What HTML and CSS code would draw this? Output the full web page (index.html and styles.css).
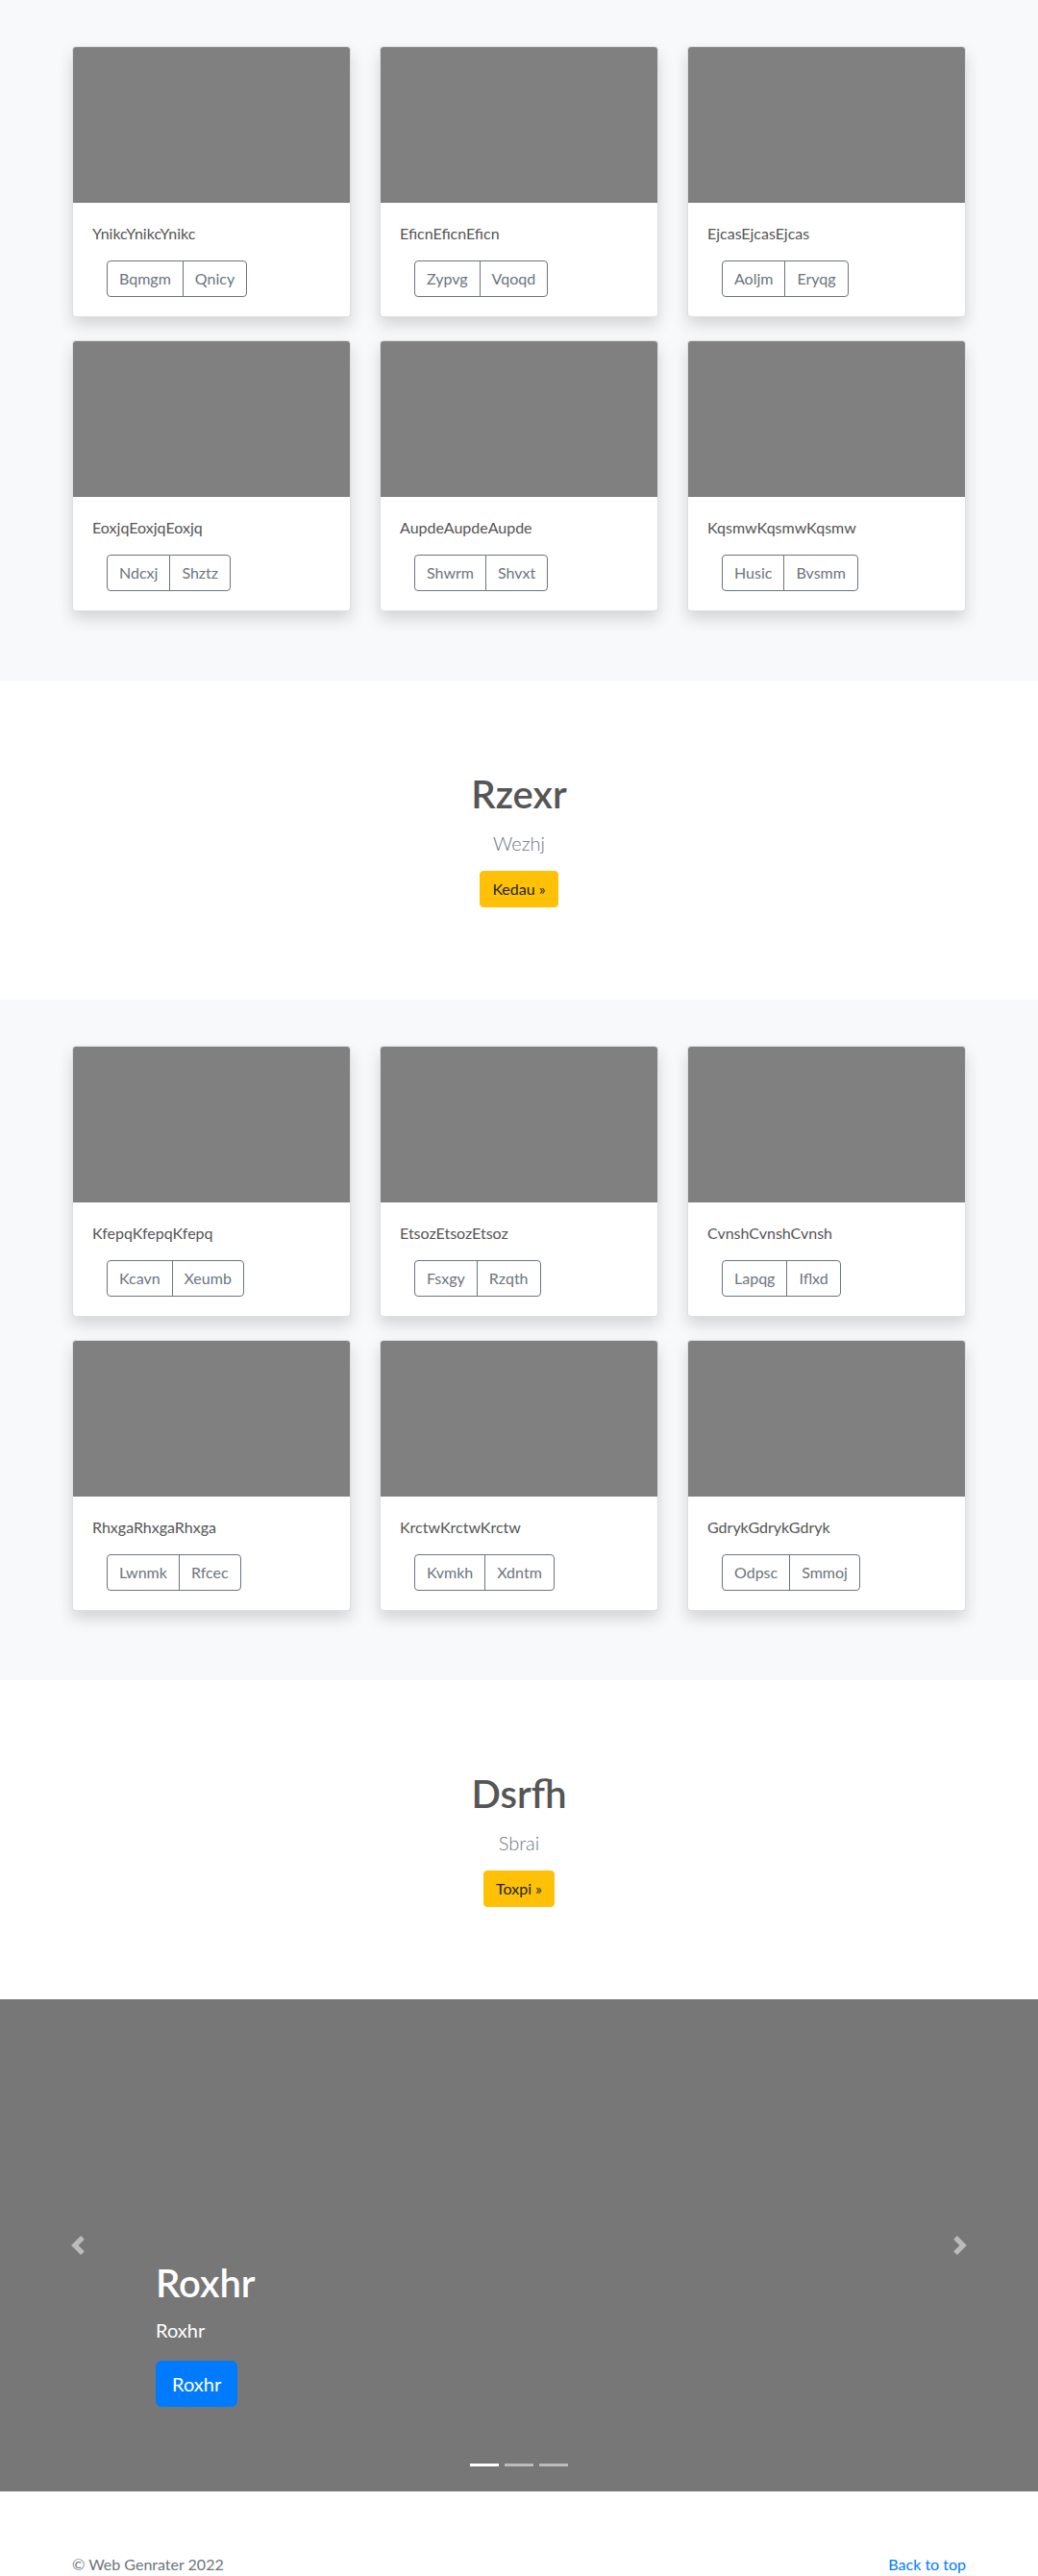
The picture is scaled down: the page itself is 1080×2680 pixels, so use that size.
FILE: index.html
```html
<!DOCTYPE html>
<html lang="en">
<head>
<meta charset="utf-8">
<title>Album</title>
<link rel="stylesheet" href="styles.css">
</head>
<body>
<main>
  <section class="album">
    <div class="container">
      <div class="grid">
        <div class="card"><div class="card-img"></div><div class="card-body"><p class="card-text">YnikcYnikcYnikc</p><div class="btn-group"><button class="btn">Bqmgm</button><button class="btn">Qnicy</button></div></div></div>
        <div class="card"><div class="card-img"></div><div class="card-body"><p class="card-text">EficnEficnEficn</p><div class="btn-group"><button class="btn">Zypvg</button><button class="btn">Vqoqd</button></div></div></div>
        <div class="card"><div class="card-img"></div><div class="card-body"><p class="card-text">EjcasEjcasEjcas</p><div class="btn-group"><button class="btn">Aoljm</button><button class="btn">Eryqg</button></div></div></div>
        <div class="card"><div class="card-img"></div><div class="card-body"><p class="card-text">EoxjqEoxjqEoxjq</p><div class="btn-group"><button class="btn">Ndcxj</button><button class="btn">Shztz</button></div></div></div>
        <div class="card"><div class="card-img"></div><div class="card-body"><p class="card-text">AupdeAupdeAupde</p><div class="btn-group"><button class="btn">Shwrm</button><button class="btn">Shvxt</button></div></div></div>
        <div class="card"><div class="card-img"></div><div class="card-body"><p class="card-text">KqsmwKqsmwKqsmw</p><div class="btn-group"><button class="btn">Husic</button><button class="btn">Bvsmm</button></div></div></div>
      </div>
    </div>
  </section>

  <section class="jumbo">
    <h1 class="jumbo-title">Rzexr</h1>
    <p class="lead">Wezhj</p>
    <p class="jumbo-actions"><a class="btn-warning" href="#">Kedau »</a></p>
  </section>

  <section class="album">
    <div class="container">
      <div class="grid">
        <div class="card"><div class="card-img"></div><div class="card-body"><p class="card-text">KfepqKfepqKfepq</p><div class="btn-group"><button class="btn">Kcavn</button><button class="btn">Xeumb</button></div></div></div>
        <div class="card"><div class="card-img"></div><div class="card-body"><p class="card-text">EtsozEtsozEtsoz</p><div class="btn-group"><button class="btn">Fsxgy</button><button class="btn">Rzqth</button></div></div></div>
        <div class="card"><div class="card-img"></div><div class="card-body"><p class="card-text">CvnshCvnshCvnsh</p><div class="btn-group"><button class="btn">Lapqg</button><button class="btn">Iflxd</button></div></div></div>
        <div class="card"><div class="card-img"></div><div class="card-body"><p class="card-text">RhxgaRhxgaRhxga</p><div class="btn-group"><button class="btn">Lwnmk</button><button class="btn">Rfcec</button></div></div></div>
        <div class="card"><div class="card-img"></div><div class="card-body"><p class="card-text">KrctwKrctwKrctw</p><div class="btn-group"><button class="btn">Kvmkh</button><button class="btn">Xdntm</button></div></div></div>
        <div class="card"><div class="card-img"></div><div class="card-body"><p class="card-text">GdrykGdrykGdryk</p><div class="btn-group"><button class="btn">Odpsc</button><button class="btn">Smmoj</button></div></div></div>
      </div>
    </div>
  </section>

  <section class="jumbo">
    <h1 class="jumbo-title">Dsrfh</h1>
    <p class="lead">Sbrai</p>
    <p class="jumbo-actions"><a class="btn-warning" href="#">Toxpi »</a></p>
  </section>

  <div class="carousel">
    <a class="carousel-control prev" href="#"><svg class="chev" viewBox="0 0 8 8" width="20" height="20"><path d="M5.25 0l-4 4 4 4 1.5-1.5L4.25 4l2.5-2.5L5.25 0z" fill="#fff"/></svg></a>
    <a class="carousel-control next" href="#"><svg class="chev" viewBox="0 0 8 8" width="20" height="20"><path d="M2.75 0l-1.5 1.5L3.75 4l-2.5 2.5L2.75 8l4-4-4-4z" fill="#fff"/></svg></a>
    <div class="carousel-caption">
      <h1 class="caption-title">Roxhr</h1>
      <p class="caption-text">Roxhr</p>
      <p class="caption-actions"><a class="btn-primary" href="#">Roxhr</a></p>
    </div>
    <ol class="indicators">
      <li class="active"></li>
      <li></li>
      <li></li>
    </ol>
  </div>
</main>

<footer class="footer">
  <div class="footer-inner">
    <p class="copy">© Web Genrater 2022</p>
    <a class="back" href="#">Back to top</a>
  </div>
</footer>
</body>
</html>
```

FILE: styles.css
```css
* { box-sizing: border-box; }

html, body {
  margin: 0;
  padding: 0;
}

body {
  font-family: "Lato", "Open Sans", "Liberation Sans", sans-serif;
  font-size: 16px;
  line-height: 24px;
  color: #555;
  background: #fff;
}

p { margin: 0; }
h1 { margin: 0; }

.album {
  background: #f8f9fa;
  padding: 48px 0 72px;
}

.container {
  width: 930px;
  margin: 0 auto;
}

.grid {
  display: grid;
  grid-template-columns: repeat(3, 290px);
  column-gap: 30px;
  row-gap: 24px;
}

.card {
  background: #fff;
  border: 1px solid rgba(0, 0, 0, 0.125);
  border-radius: 4px;
  overflow: hidden;
  box-shadow: 0 8px 16px rgba(0, 0, 0, 0.15);
}

.card-img {
  height: 162px;
  background: #808080;
}

.card-body {
  padding: 20px;
}

.card-text {
  margin-bottom: 16px;
  color: #555;
}

.btn-group {
  display: inline-flex;
  margin-left: 15px;
}

.btn {
  font-family: inherit;
  font-size: 16px;
  line-height: 24px;
  padding: 6px 12px;
  color: #6c757d;
  background: transparent;
  border: 1px solid #6c757d;
  border-radius: 0;
  margin: 0;
}

.btn:first-child {
  border-radius: 4px 0 0 4px;
}

.btn:last-child {
  border-radius: 0 4px 4px 0;
  margin-left: -1px;
}

.jumbo {
  background: #fff;
  text-align: center;
  padding: 94px 0 96px;
}

.jumbo-title {
  font-size: 40px;
  line-height: 48px;
  font-weight: 600;
  color: #555;
  margin-bottom: 12px;
}

.lead {
  font-size: 20px;
  line-height: 30px;
  font-weight: 300;
  color: #6c757d;
  margin-bottom: 14px;
}

.jumbo-actions {
  display: flex;
  justify-content: center;
}

.btn-warning {
  display: inline-block;
  background: #ffc107;
  color: #212529;
  border: 1px solid #ffc107;
  border-radius: 4px;
  padding: 6px 12px;
  font-size: 16px;
  line-height: 24px;
  text-decoration: none;
}

.carousel {
  position: relative;
  height: 512px;
  background: #777;
}

.carousel-control {
  position: absolute;
  top: 0;
  bottom: 0;
  width: 15%;
  display: flex;
  align-items: center;
  justify-content: center;
  opacity: 0.5;
}

.carousel-control.prev { left: 0; }
.carousel-control.next { right: 0; }

.chev { display: block; }

.carousel-caption {
  position: absolute;
  left: 15%;
  right: 15%;
  bottom: 48px;
  padding: 20px 0;
  color: #fff;
  text-align: left;
}

.caption-title {
  font-size: 40px;
  line-height: 48px;
  font-weight: 600;
  margin-bottom: 10px;
}

.caption-text {
  font-size: 20px;
  line-height: 30px;
  margin-bottom: 17px;
}

.caption-actions {
  display: flex;
  margin-bottom: 20px;
}

.btn-primary {
  display: inline-block;
  background: #007bff;
  color: #fff;
  border: 1px solid #007bff;
  border-radius: 6px;
  padding: 8px 16px;
  font-size: 20px;
  line-height: 30px;
  text-decoration: none;
}

.indicators {
  position: absolute;
  left: 0;
  right: 0;
  bottom: 16px;
  margin: 0;
  padding: 0;
  list-style: none;
  display: flex;
  justify-content: center;
}

.indicators li {
  width: 30px;
  height: 3px;
  margin: 10px 3px;
  background: #fff;
  opacity: 0.5;
}

.indicators li.active {
  opacity: 1;
}

.footer {
  padding: 64px 0 64px;
  color: #6c757d;
}

.footer-inner {
  width: 930px;
  margin: 0 auto;
  display: flex;
  justify-content: space-between;
}

.back {
  color: #007bff;
  text-decoration: none;
}
```
